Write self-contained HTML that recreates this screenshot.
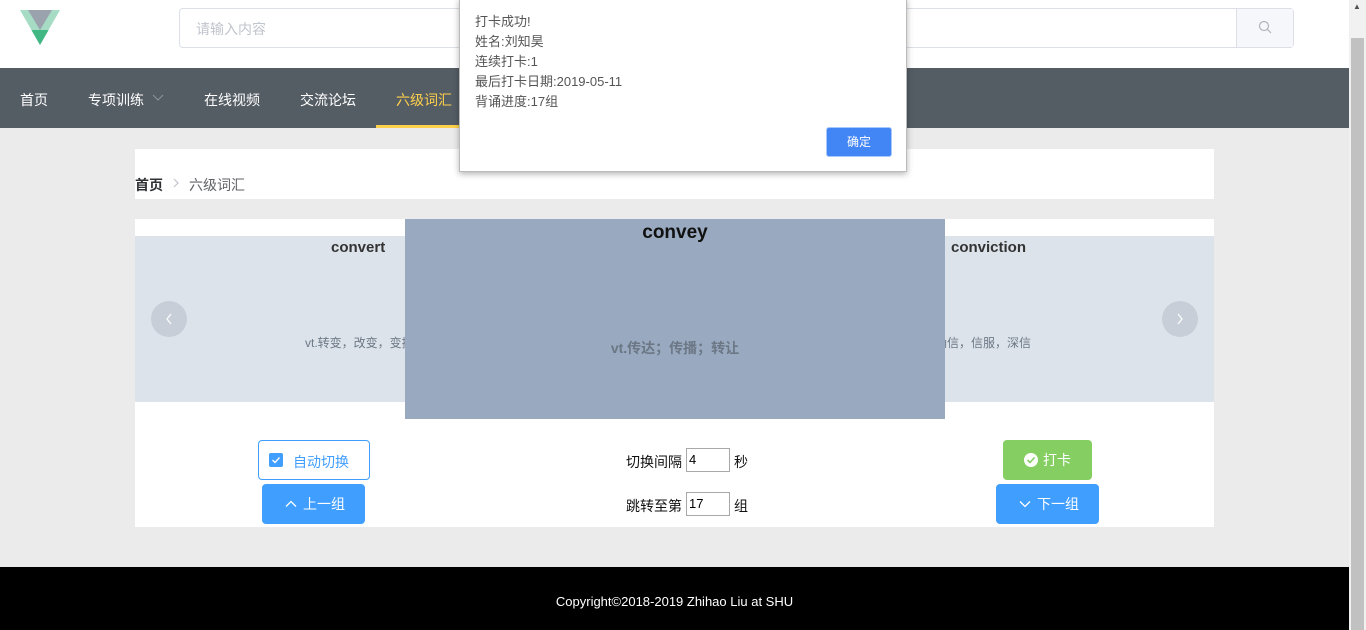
<!DOCTYPE html>
<html><head><meta charset="utf-8"><style>
*{margin:0;padding:0;box-sizing:border-box}
body{width:1366px;height:630px;overflow:hidden;background:#ebebeb;font-family:"Liberation Sans","Noto Sans CJK SC",sans-serif;position:relative}
.abs{position:absolute}
</style></head><body>
<div class="abs" style="left:0;top:0;width:1349px;height:68px;background:#fff"></div>
<svg class="abs" style="left:20px;top:10px" width="40" height="36" viewBox="0 0 40 36"><polygon points="0,0 40,0 20,35" fill="#a6dcc4"/><polygon points="8,0 32,0 20,20" fill="#9aa3ad"/><polygon points="11.4,20 28.6,20 20,35" fill="#41b883"/></svg>
<div class="abs" style="left:179px;top:8px;width:1115px;height:40px;border:1px solid #dcdfe6;border-radius:4px;background:#fff"></div>
<div class="abs" style="left:196px;top:19px;font-size:14px;color:#c0c4cc">请输入内容</div>
<div class="abs" style="left:1236px;top:9px;width:57px;height:38px;background:#f5f7fa;border-left:1px solid #dcdfe6"></div>
<svg class="abs" style="left:1258px;top:20px" width="14" height="14" viewBox="0 0 14 14"><circle cx="6" cy="6" r="4.5" fill="none" stroke="#b0b4bb" stroke-width="1.2"/><line x1="9.3" y1="9.3" x2="13" y2="13" stroke="#b0b4bb" stroke-width="1.2"/></svg>
<div class="abs" style="left:0;top:68px;width:1349px;height:60px;background:#545c64"></div>
<div class="abs" style="top:90px;left:20px;font-size:14px;color:#fff">首页</div>
<div class="abs" style="top:90px;left:88px;font-size:14px;color:#fff">专项训练</div>
<svg class="abs" style="left:152px;top:94px" width="12" height="8"><polyline points="1,1 6,6 11,1" fill="none" stroke="#8c939a" stroke-width="1"/></svg>
<div class="abs" style="top:90px;left:204px;font-size:14px;color:#fff">在线视频</div>
<div class="abs" style="top:90px;left:300px;font-size:14px;color:#fff">交流论坛</div>
<div class="abs" style="top:90px;left:396px;font-size:14px;color:#ffd04b">六级词汇</div>
<div class="abs" style="left:376px;top:125px;width:84px;height:3px;background:#ffd04b"></div>
<div class="abs" style="left:135px;top:149px;width:1079px;height:50px;background:#fff"></div>
<div class="abs" style="left:135px;top:175px;font-size:14px;color:#303133;font-weight:bold">首页</div>
<svg class="abs" style="left:172px;top:178px" width="8" height="10"><polyline points="2,1 6,5 2,9" fill="none" stroke="#c0c4cc" stroke-width="1.2"/></svg>
<div class="abs" style="left:189px;top:175px;font-size:14px;color:#606266">六级词汇</div>
<div class="abs" style="left:135px;top:219px;width:1079px;height:308px;background:#fff"></div>
<div class="abs" style="left:135px;top:236px;width:1079px;height:166px;background:#dde3ea"></div>
<div class="abs" style="left:331px;top:239px;font-size:15px;font-weight:bold;color:#333">convert</div>
<div class="abs" style="left:305px;top:334px;font-size:12px;color:#6b7785">vt.转变，改变，变换</div>
<div class="abs" style="left:951px;top:239px;font-size:15px;font-weight:bold;color:#333">conviction</div>
<div class="abs" style="left:925px;top:334px;font-size:12px;color:#6b7785">n.确信，信服，深信</div>
<div class="abs" style="left:151px;top:301px;width:36px;height:36px;border-radius:50%;background:#c8ced8"></div>
<svg class="abs" style="left:165px;top:313px" width="8" height="12"><polyline points="6,1 2,6 6,11" fill="none" stroke="#fff" stroke-width="1.2"/></svg>
<div class="abs" style="left:1162px;top:301px;width:36px;height:36px;border-radius:50%;background:#c8ced8"></div>
<svg class="abs" style="left:1176px;top:313px" width="8" height="12"><polyline points="2,1 6,6 2,11" fill="none" stroke="#fff" stroke-width="1.2"/></svg>
<div class="abs" style="left:405px;top:219px;width:540px;height:200px;background:#99a9bf"></div>
<div class="abs" style="left:405px;top:222px;width:540px;text-align:center;font-size:19px;font-weight:bold;color:#111">convey</div>
<div class="abs" style="left:405px;top:338px;width:540px;text-align:center;font-size:14px;color:#6b7785;font-weight:bold">vt.传达；传播；转让</div>
<div class="abs" style="left:258px;top:440px;width:112px;height:40px;border:1px solid #409eff;border-radius:4px;background:#fff"></div>
<div class="abs" style="left:269px;top:453px;width:14px;height:14px;background:#409eff;border-radius:2px"></div>
<svg class="abs" style="left:269px;top:453px" width="14" height="14"><polyline points="3.5,7 6,9.5 10.5,4.5" fill="none" stroke="#fff" stroke-width="1.4"/></svg>
<div class="abs" style="left:293px;top:452px;font-size:14px;color:#409eff">自动切换</div>
<div class="abs" style="left:262px;top:484px;width:103px;height:40px;background:#409eff;border-radius:4px;color:#fff;font-size:14px;line-height:40px;padding-left:41px">上一组</div>
<svg class="abs" style="left:285px;top:500px" width="12" height="8"><polyline points="1,6.5 6,1.5 11,6.5" fill="none" stroke="#fff" stroke-width="1.3"/></svg>
<div class="abs" style="left:626px;top:452px;font-size:14px;color:#111">切换间隔</div>
<div class="abs" style="left:686px;top:448px;width:44px;height:24px;border:1px solid #a9a9a9;background:#fff;font-size:13px;padding:3px 2px">4</div>
<div class="abs" style="left:734px;top:452px;font-size:14px;color:#111">秒</div>
<div class="abs" style="left:626px;top:496px;font-size:14px;color:#111">跳转至第</div>
<div class="abs" style="left:686px;top:492px;width:44px;height:24px;border:1px solid #a9a9a9;background:#fff;font-size:13px;padding:3px 2px">17</div>
<div class="abs" style="left:734px;top:496px;font-size:14px;color:#111">组</div>
<div class="abs" style="left:1003px;top:440px;width:89px;height:40px;background:#85ce61;border-radius:4px;color:#fff;font-size:14px;line-height:40px;padding-left:40px">打卡</div>
<svg class="abs" style="left:1024px;top:453px" width="14" height="14"><circle cx="7" cy="7" r="7" fill="#fff"/><polyline points="3.5,7 6,9.5 10.5,4.5" fill="none" stroke="#85ce61" stroke-width="1.6"/></svg>
<div class="abs" style="left:996px;top:484px;width:103px;height:40px;background:#409eff;border-radius:4px;color:#fff;font-size:14px;line-height:40px;padding-left:41px">下一组</div>
<svg class="abs" style="left:1019px;top:500px" width="12" height="8"><polyline points="1,1.5 6,6.5 11,1.5" fill="none" stroke="#fff" stroke-width="1.3"/></svg>
<div class="abs" style="left:0;top:567px;width:1349px;height:63px;background:#000"></div>
<div class="abs" style="left:0;top:594px;width:1349px;text-align:center;font-size:13px;color:#fff">Copyright©2018-2019 Zhihao Liu at SHU</div>
<div class="abs" style="left:1349px;top:0;width:17px;height:630px;background:#f1f1f1"></div>
<div class="abs" style="left:1351px;top:38px;width:13px;height:592px;background:#c1c1c1"></div>
<div class="abs" style="left:1353px;top:2px;font-size:8px;color:#505050">▲</div>
<div class="abs" style="left:459px;top:-2px;width:448px;height:174px;background:#fff;border:1px solid #bbb;box-shadow:0 2px 6px rgba(0,0,0,.3)"></div>
<div class="abs" style="left:475px;top:12px;font-size:13px;color:#555;line-height:20px">打卡成功!<br>姓名:刘知昊<br>连续打卡:1<br>最后打卡日期:2019-05-11<br>背诵进度:17组</div>
<div class="abs" style="left:826px;top:127px;width:66px;height:30px;background:#4285f4;border:1px solid #a8c7fa;border-radius:3px;color:#fff;font-size:12px;text-align:center;line-height:28px">确定</div>
</body></html>
